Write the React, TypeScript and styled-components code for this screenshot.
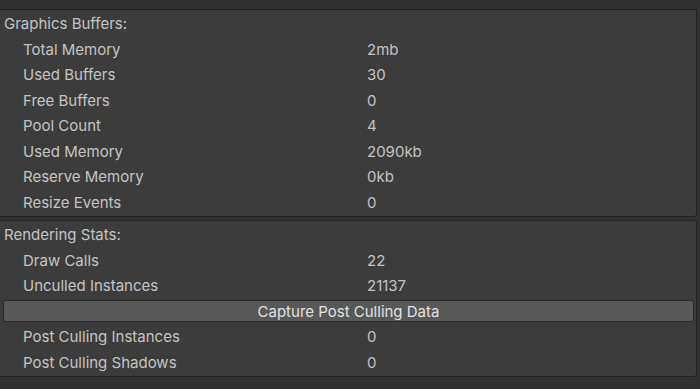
import React from "react";
import styled, { createGlobalStyle } from "styled-components";

interface Stat {
  label: string;
  value: string;
}

const bufferStats: Stat[] = [
  { label: "Total Memory", value: "2mb" },
  { label: "Used Buffers", value: "30" },
  { label: "Free Buffers", value: "0" },
  { label: "Pool Count", value: "4" },
  { label: "Used Memory", value: "2090kb" },
  { label: "Reserve Memory", value: "0kb" },
  { label: "Resize Events", value: "0" },
];

const renderStats: Stat[] = [
  { label: "Draw Calls", value: "22" },
  { label: "Unculled Instances", value: "21137" },
];

const cullingStats: Stat[] = [
  { label: "Post Culling Instances", value: "0" },
  { label: "Post Culling Shadows", value: "0" },
];

const StatRows = ({ stats }: { stats: Stat[] }) => (
  <>
    {stats.map((s) => (
      <Row key={s.label}>
        <Label>{s.label}</Label>
        <Value>{s.value}</Value>
      </Row>
    ))}
  </>
);

const App: React.FC = () => {
  return (
    <>
      <GlobalStyle />
      <Inspector>
        <Panel>
          <Header>Graphics Buffers:</Header>
          <StatRows stats={bufferStats} />
        </Panel>

        <Panel gap={3}>
          <Header>Rendering Stats:</Header>
          <StatRows stats={renderStats} />
          <ButtonRow>
            <CaptureButton>Capture Post Culling Data</CaptureButton>
          </ButtonRow>
          <StatRows stats={cullingStats} />
        </Panel>
      </Inspector>
    </>
  );
};

export default App;

const GlobalStyle = createGlobalStyle`
  html, body {
    margin: 0;
    padding: 0;
    background: #323232;
    height: 100%;
    overflow: hidden;
  }
  body {
    font-family: Inter, "Noto Sans", sans-serif;
    font-size: 15px;
    color: #c4c4c4;
  }
`;

const Inspector = styled.div`
  width: 700px;
  height: 389px;
  padding: 9px 3px 0 0;
  box-sizing: border-box;
  display: flex;
  flex-direction: column;
`;

const Panel = styled.div<{ gap?: number }>`
  margin-top: ${({ gap }) => gap ?? 0}px;
  background: #3c3c3c;
  border: 1px solid #232323;
  border-left: none;
  border-top-right-radius: 3px;
  border-bottom-right-radius: 3px;
  padding: 1px 0;
  display: flex;
  flex-direction: column;
`;

const Header = styled.div`
  height: 25.5px;
  display: flex;
  align-items: center;
  padding-left: 4px;
`;

const Row = styled.div`
  height: 25.5px;
  display: flex;
  align-items: center;
  padding-left: 23px;
`;

const Label = styled.span`
  width: 344px;
  flex-shrink: 0;
`;

const Value = styled.span``;

const ButtonRow = styled.div`
  height: 25.5px;
  display: flex;
  align-items: center;
  padding: 0 2px 0 3px;
`;

const CaptureButton = styled.button`
  flex: 1;
  height: 22px;
  background: #585858;
  border: 1px solid #2a2a2a;
  border-radius: 3px;
  color: #e2e2e2;
  font-family: Inter, "Noto Sans", sans-serif;
  font-size: 15px;
  padding: 0;
  cursor: pointer;
`;
